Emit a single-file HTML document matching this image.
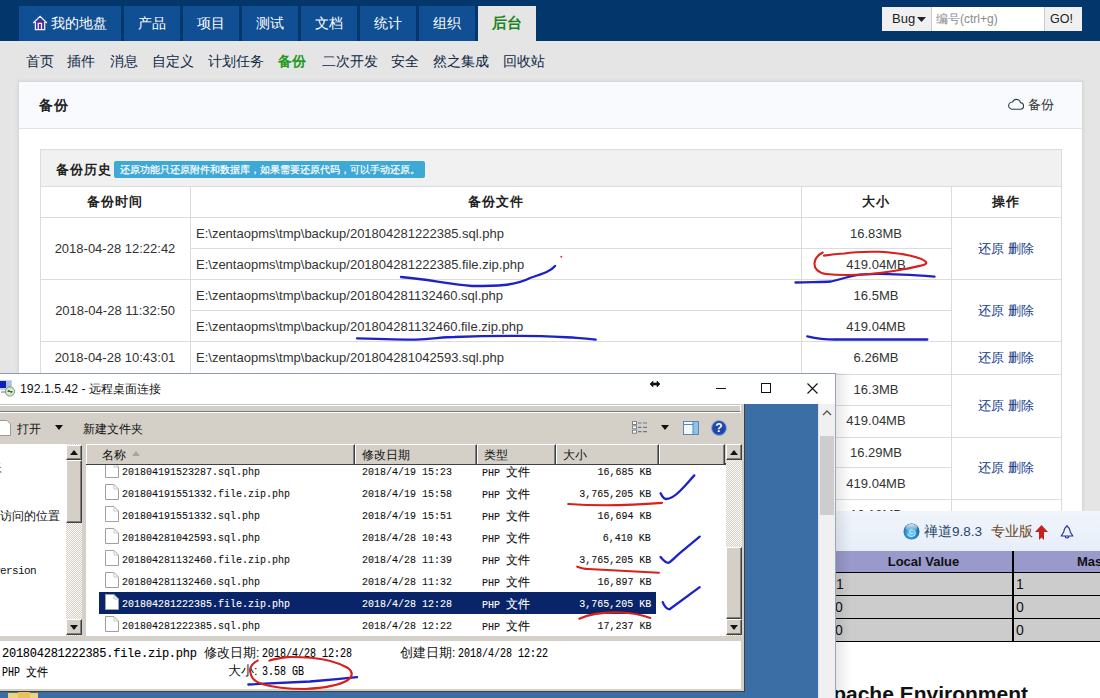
<!DOCTYPE html>
<html><head><meta charset="utf-8">
<style>
*{margin:0;padding:0;box-sizing:border-box}
html,body{width:1100px;height:698px;overflow:hidden}
body{position:relative;background:#e5e5e5;font-family:"Liberation Sans",sans-serif;color:#333;font-size:13px}
.a{position:absolute;white-space:nowrap}
#hdr{left:0;top:0;width:1100px;height:42px;background:#03376c;border-bottom:1px solid #dfe7f2}
.tab{position:absolute;top:6px;height:35px;background:#104f93;color:#fff;font-size:14px;line-height:34px;text-align:center}
.tab.act{background:#e5e5e5;color:#1b8420;font-weight:bold;font-size:15px;height:36px}
.sn{position:absolute;top:52px;font-size:14px;line-height:18px;color:#0f2844}
#panel{left:18px;top:81px;width:1065px;height:640px;background:#fff;border:1px solid #d8d8d8;box-shadow:0 0 4px rgba(0,0,0,.08)}
#ph{left:0;top:0;width:1063px;height:47px;background:#f8fafd;border-bottom:1px solid #e2e2e2}
.hl{position:absolute;height:1px;background:#dcdcdc}
.vl{position:absolute;width:1px;background:#dcdcdc}
.td{position:absolute;font-size:13px;color:#333;line-height:16px}
.th{position:absolute;font-size:13px;font-weight:bold;color:#222;line-height:16px;letter-spacing:1px}
.lk{position:absolute;font-size:13px;color:#163a88;line-height:16px}
.sbtn{background:#d4d0c8;border-top:1px solid #fff;border-left:1px solid #fff;border-right:1px solid #404040;border-bottom:1px solid #404040;box-shadow:inset -1px -1px 0 #808080}
.ms{font-family:"Liberation Mono",monospace;font-size:11px;line-height:16px;color:#000;-webkit-text-stroke-width:0.1px;transform:scaleX(.909);transform-origin:left center}
.ms.r{transform-origin:right center}
.cj{font-family:"Liberation Sans",sans-serif;font-size:12px;display:inline-block;transform:scaleX(1.1);transform-origin:left center}
.hd{background:#d4d0c8;border-top:1px solid #fff;border-left:1px solid #fff;border-right:1px solid #404040;box-shadow:inset -1px 0 0 #808080}
</style></head>
<body>
<!-- header -->
<div id="hdr" class="a"></div>
<div class="tab" style="left:19px;width:102px"></div>
<svg class="a" style="left:32px;top:15px" width="16" height="16" viewBox="0 0 16 16"><path d="M3.6 7.5L8.1 3.3L12.5 7.5V14.5H3.6z" fill="#4b2d98"/><path d="M1.2 8L8.1 1.4L14.9 8M3.4 7V14.6H12.7V7M6.3 14.5V8.4H9.5V14.5" fill="none" stroke="#f2ecff" stroke-width="1.3"/></svg>
<div class="a" style="left:51px;top:6px;height:34px;line-height:34px;font-size:14px;color:#fff">我的地盘</div>
<div class="tab" style="left:124px;width:56px">产品</div>
<div class="tab" style="left:183px;width:56px">项目</div>
<div class="tab" style="left:242px;width:56px">测试</div>
<div class="tab" style="left:301px;width:56px">文档</div>
<div class="tab" style="left:360px;width:56px">统计</div>
<div class="tab" style="left:419px;width:56px">组织</div>
<div class="tab act" style="left:478px;width:58px">后台</div>

<!-- search -->
<div class="a" style="left:882px;top:7px;width:49px;height:24px;background:#f0f0f0;font-size:13px;line-height:24px;color:#222;padding-left:10px">Bug</div><svg class="a" style="left:917px;top:17px" width="9" height="5"><path d="M0 0H9L4.5 5z" fill="#222"/></svg>
<div class="a" style="left:931px;top:7px;width:113px;height:24px;background:#fff;font-size:12px;line-height:24px;color:#8a8a8a;padding-left:4px;border-left:1px solid #ccc">编号(ctrl+g)</div>
<div class="a" style="left:1044px;top:7px;width:38px;height:24px;background:#f0f0f0;font-size:12.5px;line-height:24px;color:#222;padding-left:5px;border-left:1px solid #ccc">GO!</div>

<!-- subnav -->
<div class="sn" style="left:26px">首页</div>
<div class="sn" style="left:67px">插件</div>
<div class="sn" style="left:110px">消息</div>
<div class="sn" style="left:152px">自定义</div>
<div class="sn" style="left:208px">计划任务</div>
<div class="sn" style="left:278px;color:#229922;font-weight:bold">备份</div>
<div class="sn" style="left:322px">二次开发</div>
<div class="sn" style="left:391px">安全</div>
<div class="sn" style="left:433px">然之集成</div>
<div class="sn" style="left:503px">回收站</div>

<!-- panel -->
<div id="panel" class="a">
  <div id="ph" class="a"></div>
</div>
<div class="th" style="left:39px;top:97px;font-size:14px">备份</div>
<div class="a" style="left:1008px;top:97px;font-size:13px;color:#333;line-height:16px"><svg width="16" height="12" viewBox="0 0 16 12" style="vertical-align:-1px"><path d="M4 11.2h8.3a3.2 3.2 0 0 0 .3-6.4A4.2 4.2 0 0 0 4.6 4 3.6 3.6 0 0 0 4 11.2z" fill="none" stroke="#2a3b50" stroke-width="1.1"/></svg> 备份</div>

<!-- section -->
<div class="a" style="left:40px;top:149px;width:1022px;height:38px;background:#f1f1f1;border:1px solid #dcdcdc;border-bottom:none"></div>
<div class="th" style="left:56px;top:162px">备份历史</div>
<div class="a" style="left:114px;top:161px;width:311px;height:17px;background:#3fa9d6;border-radius:2px;color:#fff;font-size:10px;line-height:17px;padding-left:6px;letter-spacing:0px;-webkit-text-stroke-width:0.2px">还原功能只还原附件和数据库，如果需要还原代码，可以手动还原。</div>

<!-- table lines -->
<div id="tbl">
<div class="hl" style="left:40px;top:186px;width:1022px"></div>
<div class="hl" style="left:40px;top:217px;width:1022px"></div>
<div class="hl" style="left:40px;top:279px;width:1022px"></div>
<div class="hl" style="left:40px;top:341px;width:1022px"></div>
<div class="hl" style="left:40px;top:374px;width:1022px"></div>
<div class="hl" style="left:40px;top:437px;width:1022px"></div>
<div class="hl" style="left:40px;top:499px;width:1022px"></div>
<div class="hl" style="left:190px;top:248px;width:762px"></div>
<div class="hl" style="left:190px;top:310px;width:762px"></div>
<div class="hl" style="left:190px;top:405px;width:762px"></div>
<div class="hl" style="left:190px;top:467px;width:762px"></div>
<div class="vl" style="left:40px;top:149px;height:560px"></div>
<div class="vl" style="left:190px;top:186px;height:520px"></div>
<div class="vl" style="left:801px;top:186px;height:520px"></div>
<div class="vl" style="left:951px;top:186px;height:520px"></div>
<div class="vl" style="left:1061px;top:149px;height:560px"></div>
<div class="hl" style="left:40px;top:149px;width:1022px"></div>
<div class="th" style="left:40px;width:150px;top:194px;text-align:center">备份时间</div>
<div class="th" style="left:190px;width:611px;top:194px;text-align:center">备份文件</div>
<div class="th" style="left:801px;width:150px;top:194px;text-align:center">大小</div>
<div class="th" style="left:951px;width:110px;top:194px;text-align:center">操作</div>
<div class="td" style="left:40px;width:150px;top:241px;text-align:center">2018-04-28 12:22:42</div>
<div class="td" style="left:40px;width:150px;top:303px;text-align:center">2018-04-28 11:32:50</div>
<div class="td" style="left:40px;width:150px;top:350px;text-align:center">2018-04-28 10:43:01</div>
<div class="td" style="left:196px;top:226px">E:\zentaopms\tmp\backup/201804281222385.sql.php</div>
<div class="td" style="left:801px;width:150px;top:226px;text-align:center">16.83MB</div>
<div class="td" style="left:196px;top:257px">E:\zentaopms\tmp\backup/201804281222385.file.zip.php</div>
<div class="td" style="left:801px;width:150px;top:257px;text-align:center">419.04MB</div>
<div class="td" style="left:196px;top:288px">E:\zentaopms\tmp\backup/201804281132460.sql.php</div>
<div class="td" style="left:801px;width:150px;top:288px;text-align:center">16.5MB</div>
<div class="td" style="left:196px;top:319px">E:\zentaopms\tmp\backup/201804281132460.file.zip.php</div>
<div class="td" style="left:801px;width:150px;top:319px;text-align:center">419.04MB</div>
<div class="td" style="left:196px;top:350px">E:\zentaopms\tmp\backup/201804281042593.sql.php</div>
<div class="td" style="left:801px;width:150px;top:350px;text-align:center">6.26MB</div>
<div class="td" style="left:801px;width:150px;top:382px;text-align:center">16.3MB</div>
<div class="td" style="left:801px;width:150px;top:413px;text-align:center">419.04MB</div>
<div class="td" style="left:801px;width:150px;top:445px;text-align:center">16.29MB</div>
<div class="td" style="left:801px;width:150px;top:476px;text-align:center">419.04MB</div>
<div class="td" style="left:801px;width:150px;top:507px;text-align:center">16.18MB</div>
<div class="lk" style="left:951px;width:110px;top:241px;text-align:center">还原 删除</div>
<div class="lk" style="left:951px;width:110px;top:303px;text-align:center">还原 删除</div>
<div class="lk" style="left:951px;width:110px;top:350px;text-align:center">还原 删除</div>
<div class="lk" style="left:951px;width:110px;top:398px;text-align:center">还原 删除</div>
<div class="lk" style="left:951px;width:110px;top:460px;text-align:center">还原 删除</div>
</div>

<!-- ===== RDP window ===== -->
<div class="a" style="left:-10px;top:373px;width:846px;height:330px;background:#fff;border:1px solid #8d9cb0"></div>
<svg class="a" style="left:0;top:379px" width="16" height="18" viewBox="0 0 16 18">
 <rect x="0" y="1" width="12" height="10" fill="#c9d3dc"/><rect x="0" y="2" width="6" height="7" fill="#0d1fb8"/><rect x="6" y="2" width="5" height="6" fill="#a8c0ea"/>
 <rect x="1" y="12" width="8" height="2" fill="#b5bcc4"/>
 <circle cx="10" cy="12.5" r="4.6" fill="#d8ead0" stroke="#6a7a6a" stroke-width="0.8"/><path d="M7.5 12.5h5M7.8 12.5l1.6-1.4M12.2 12.5l-1.6 1.4" stroke="#1f7a1f" stroke-width="1.2" fill="none"/>
</svg>
<div class="a" style="left:20px;top:381px;font-size:12.3px;line-height:16px;color:#111">192.1.5.42 - 远程桌面连接</div>
<svg class="a" style="left:649px;top:380px" width="12" height="8" viewBox="0 0 12 8"><path d="M1 4L4 1V3H8V1L11 4L8 7V5H4V7z" fill="#111" stroke="#111" stroke-width=".6" stroke-linejoin="round"/></svg>
<div class="a" style="left:716px;top:388px;width:10px;height:1px;background:#111"></div>
<div class="a" style="left:761px;top:383px;width:10px;height:10px;border:1px solid #111"></div>
<svg class="a" style="left:807px;top:383px" width="11" height="11" viewBox="0 0 11 11"><path d="M.5 .5L10.5 10.5M10.5 .5L.5 10.5" stroke="#111" stroke-width="1.1"/></svg>

<!-- client area -->
<div class="a" style="left:745px;top:404px;width:73px;height:294px;background:#3a6ea5"></div>
<div class="a" style="left:0;top:692px;width:745px;height:6px;background:#3a6ea5"></div>
<svg class="a" style="left:8px;top:692px" width="32" height="6"><rect x="0" y="1" width="30" height="5" fill="#f0d27a"/><rect x="10" y="0" width="12" height="6" fill="#e8c35c"/></svg>
<div class="a" style="left:818px;top:404px;width:17px;height:294px;background:#f0f0f0;border-left:1px solid #e3e3e3"></div>
<div class="a" style="left:820px;top:436px;width:14px;height:79px;background:#cdcdcd"></div>
<svg class="a" style="left:822px;top:409px" width="10" height="7" viewBox="0 0 10 7"><path d="M1 6L5 2L9 6" stroke="#555" stroke-width="1.4" fill="none"/></svg>

<!-- explorer -->
<div class="a" style="left:-5px;top:404px;width:750px;height:288px;background:#d4d0c8;border-right:1px solid #404040;border-bottom:1px solid #404040"></div>
<div class="a" style="left:-5px;top:404px;width:746px;height:8px;border-top:1px solid #c4c4c4;border-bottom:1px solid #7c7c7c;border-right:1px solid #fff;background:#d0cfcc;box-shadow:inset 0 1px 0 #fff"></div><div class="a" style="left:-5px;top:412px;width:746px;height:1px;background:#fff"></div>
<!-- toolbar -->
<svg class="a" style="left:0;top:420px" width="12" height="16" viewBox="0 0 12 16"><path d="M-2 .5H7L10.5 4V15.5H-2z" fill="#fff" stroke="#9a9a9a"/></svg>
<div class="a" style="left:17px;top:421px;font-size:12px;line-height:16px;color:#111">打开</div>
<svg class="a" style="left:55px;top:425px" width="8" height="5"><path d="M0 0H8L4 5z" fill="#111"/></svg>
<div class="a" style="left:83px;top:421px;font-size:12px;line-height:16px;color:#111">新建文件夹</div>
<svg class="a" style="left:632px;top:421px" width="16" height="13" viewBox="0 0 16 13">
 <rect x=".5" y=".5" width="4" height="3" fill="#fff" stroke="#7a8590"/><rect x=".5" y="4.8" width="4" height="3" fill="#fff" stroke="#7a8590"/><rect x=".5" y="9.2" width="4" height="3" fill="#fff" stroke="#7a8590"/>
 <path d="M6 2h3.5M11 2h4M6 6.3h3.5M11 6.3h4M6 10.7h3.5M11 10.7h4" stroke="#6b7885" stroke-width="1.2"/>
</svg>
<svg class="a" style="left:661px;top:425px" width="8" height="5"><path d="M0 0H8L4 5z" fill="#111"/></svg>
<svg class="a" style="left:683px;top:421px" width="16" height="14" viewBox="0 0 16 14">
 <rect x=".5" y=".5" width="15" height="13" fill="#f4f8fc" stroke="#5b87b5"/><rect x="10" y="1" width="5" height="12" fill="#8cc3e8"/><path d="M10 1V13M1 3.5H10" stroke="#5b87b5"/>
</svg>
<svg class="a" style="left:711px;top:420px" width="16" height="16" viewBox="0 0 16 16">
 <circle cx="8" cy="8" r="7.5" fill="#2352b8" stroke="#8fa6d8" stroke-width="1"/><circle cx="8" cy="8" r="6" fill="#1f46a8"/>
 <text x="8" y="12.3" text-anchor="middle" font-family="Liberation Sans" font-weight="bold" font-size="12" fill="#fff">?</text>
</svg>

<!-- nav pane -->
<div class="a" style="left:0;top:444px;width:66px;height:192px;background:#fff;overflow:hidden">
 <div class="a" style="left:-10px;top:16px;font-size:12px;line-height:14px;color:#111">夹</div>
 <div class="a" style="left:0;top:65px;font-size:12px;line-height:14px;color:#111">访问的位置</div>
 <div class="a" style="left:-6px;top:120px;font-family:'Liberation Mono',monospace;font-size:11px;line-height:14px;color:#111;letter-spacing:-0.6px">version</div>
</div>
<!-- nav scrollbar -->
<div class="a" style="left:66px;top:444px;width:16px;height:192px;background:repeating-conic-gradient(#d4d0c8 0 25%,#fbfaf8 0 50%) 0 0/2px 2px"></div>
<div class="a sbtn" style="left:66px;top:445px;width:16px;height:15px"></div>
<div class="a sbtn" style="left:66px;top:460px;width:16px;height:63px"></div>
<div class="a sbtn" style="left:66px;top:619px;width:16px;height:16px"></div>
<svg class="a" style="left:70px;top:450px" width="8" height="5"><path d="M0 5H8L4 0z" fill="#111"/></svg>
<svg class="a" style="left:70px;top:625px" width="8" height="5"><path d="M0 0H8L4 5z" fill="#111"/></svg>

<!-- list -->
<div class="a" style="left:86px;top:444px;width:640px;height:192px;background:#fff;overflow:hidden" id="list">
<div class="a" style="left:13px;top:148px;width:557px;height:22px;background:#0a246a"></div>
<svg class="a" style="left:19px;top:18px" width="14" height="16" viewBox="0 0 14 16"><path d="M.5 .5H9L13.5 5V15.5H.5z" fill="#fff" stroke="#a0a0a0"/><path d="M9 .5V5H13.5" fill="none" stroke="#c8c8c8"/></svg>
<div class="a ms" style="left:36px;top:20px;color:#111">201804191523287.sql.php</div>
<div class="a ms" style="left:276px;top:20px;color:#111">2018/4/19 15:23</div>
<div class="a ms" style="left:396px;top:20px;color:#111">PHP <span class="cj">文件</span></div>
<div class="a ms r" style="right:75px;top:20px;color:#111">16,685 KB</div>
<svg class="a" style="left:19px;top:40px" width="14" height="16" viewBox="0 0 14 16"><path d="M.5 .5H9L13.5 5V15.5H.5z" fill="#fff" stroke="#a0a0a0"/><path d="M9 .5V5H13.5" fill="none" stroke="#c8c8c8"/></svg>
<div class="a ms" style="left:36px;top:42px;color:#111">201804191551332.file.zip.php</div>
<div class="a ms" style="left:276px;top:42px;color:#111">2018/4/19 15:58</div>
<div class="a ms" style="left:396px;top:42px;color:#111">PHP <span class="cj">文件</span></div>
<div class="a ms r" style="right:75px;top:42px;color:#111">3,765,205 KB</div>
<svg class="a" style="left:19px;top:62px" width="14" height="16" viewBox="0 0 14 16"><path d="M.5 .5H9L13.5 5V15.5H.5z" fill="#fff" stroke="#a0a0a0"/><path d="M9 .5V5H13.5" fill="none" stroke="#c8c8c8"/></svg>
<div class="a ms" style="left:36px;top:64px;color:#111">201804191551332.sql.php</div>
<div class="a ms" style="left:276px;top:64px;color:#111">2018/4/19 15:51</div>
<div class="a ms" style="left:396px;top:64px;color:#111">PHP <span class="cj">文件</span></div>
<div class="a ms r" style="right:75px;top:64px;color:#111">16,694 KB</div>
<svg class="a" style="left:19px;top:84px" width="14" height="16" viewBox="0 0 14 16"><path d="M.5 .5H9L13.5 5V15.5H.5z" fill="#fff" stroke="#a0a0a0"/><path d="M9 .5V5H13.5" fill="none" stroke="#c8c8c8"/></svg>
<div class="a ms" style="left:36px;top:86px;color:#111">201804281042593.sql.php</div>
<div class="a ms" style="left:276px;top:86px;color:#111">2018/4/28 10:43</div>
<div class="a ms" style="left:396px;top:86px;color:#111">PHP <span class="cj">文件</span></div>
<div class="a ms r" style="right:75px;top:86px;color:#111">6,410 KB</div>
<svg class="a" style="left:19px;top:106px" width="14" height="16" viewBox="0 0 14 16"><path d="M.5 .5H9L13.5 5V15.5H.5z" fill="#fff" stroke="#a0a0a0"/><path d="M9 .5V5H13.5" fill="none" stroke="#c8c8c8"/></svg>
<div class="a ms" style="left:36px;top:108px;color:#111">201804281132460.file.zip.php</div>
<div class="a ms" style="left:276px;top:108px;color:#111">2018/4/28 11:39</div>
<div class="a ms" style="left:396px;top:108px;color:#111">PHP <span class="cj">文件</span></div>
<div class="a ms r" style="right:75px;top:108px;color:#111">3,765,205 KB</div>
<svg class="a" style="left:19px;top:128px" width="14" height="16" viewBox="0 0 14 16"><path d="M.5 .5H9L13.5 5V15.5H.5z" fill="#fff" stroke="#a0a0a0"/><path d="M9 .5V5H13.5" fill="none" stroke="#c8c8c8"/></svg>
<div class="a ms" style="left:36px;top:130px;color:#111">201804281132460.sql.php</div>
<div class="a ms" style="left:276px;top:130px;color:#111">2018/4/28 11:32</div>
<div class="a ms" style="left:396px;top:130px;color:#111">PHP <span class="cj">文件</span></div>
<div class="a ms r" style="right:75px;top:130px;color:#111">16,897 KB</div>
<svg class="a" style="left:19px;top:150px" width="14" height="16" viewBox="0 0 14 16"><path d="M.5 .5H9L13.5 5V15.5H.5z" fill="#fff" stroke="#a0a0a0"/><path d="M9 .5V5H13.5" fill="none" stroke="#c8c8c8"/></svg>
<div class="a ms" style="left:36px;top:152px;color:#fff">201804281222385.file.zip.php</div>
<div class="a ms" style="left:276px;top:152px;color:#fff">2018/4/28 12:28</div>
<div class="a ms" style="left:396px;top:152px;color:#fff">PHP <span class="cj">文件</span></div>
<div class="a ms r" style="right:75px;top:152px;color:#fff">3,765,205 KB</div>
<svg class="a" style="left:19px;top:172px" width="14" height="16" viewBox="0 0 14 16"><path d="M.5 .5H9L13.5 5V15.5H.5z" fill="#fff" stroke="#a0a0a0"/><path d="M9 .5V5H13.5" fill="none" stroke="#c8c8c8"/></svg>
<div class="a ms" style="left:36px;top:174px;color:#111">201804281222385.sql.php</div>
<div class="a ms" style="left:276px;top:174px;color:#111">2018/4/28 12:22</div>
<div class="a ms" style="left:396px;top:174px;color:#111">PHP <span class="cj">文件</span></div>
<div class="a ms r" style="right:75px;top:174px;color:#111">17,237 KB</div>
<div class="a" style="left:0;top:0;width:640px;height:21px;background:#d4d0c8;border-bottom:2px solid #404040"></div>
<div class="a hd" style="left:0px;top:0;width:269px;height:20px"></div>
<div class="a" style="left:16px;top:3px;font-size:12px;line-height:16px;color:#111">名称</div>
<div class="a hd" style="left:269px;top:0;width:122px;height:20px"></div>
<div class="a" style="left:276px;top:3px;font-size:12px;line-height:16px;color:#111">修改日期</div>
<div class="a hd" style="left:391px;top:0;width:79px;height:20px"></div>
<div class="a" style="left:398px;top:3px;font-size:12px;line-height:16px;color:#111">类型</div>
<div class="a hd" style="left:470px;top:0;width:103px;height:20px"></div>
<div class="a" style="left:477px;top:3px;font-size:12px;line-height:16px;color:#111">大小</div>
<div class="a hd" style="left:573px;top:0;width:66px;height:20px"></div>
<svg class="a" style="left:46px;top:7px" width="8" height="5"><path d="M0 5H8L4 0z" fill="#a8a49c"/></svg>
</div>
<!-- list scrollbar -->
<div class="a" style="left:726px;top:444px;width:16px;height:192px;background:repeating-conic-gradient(#d4d0c8 0 25%,#fbfaf8 0 50%) 0 0/2px 2px"></div>
<div class="a sbtn" style="left:726px;top:444px;width:16px;height:16px"></div>
<div class="a sbtn" style="left:726px;top:547px;width:16px;height:72px"></div>
<div class="a sbtn" style="left:726px;top:619px;width:16px;height:16px"></div>
<svg class="a" style="left:730px;top:450px" width="8" height="5"><path d="M0 5H8L4 0z" fill="#111"/></svg>
<svg class="a" style="left:730px;top:625px" width="8" height="5"><path d="M0 0H8L4 5z" fill="#111"/></svg>

<!-- details pane -->
<div class="a" style="left:0;top:641px;width:741px;height:48px;background:#fff"></div>
<div id="details">
<div class="a ms" style="left:2px;top:646px;transform:none;font-size:12px;letter-spacing:-0.25px">201804281222385.file.zip.php</div>
<div class="a" style="left:204px;top:645px;font-size:12.5px;line-height:16px;color:#111">修改日期:</div>
<div class="a ms" style="left:262px;top:646px;font-size:12px;transform:scaleX(.834)">2018/4/28 12:28</div>
<div class="a" style="left:400px;top:645px;font-size:12.5px;line-height:16px;color:#111">创建日期:</div>
<div class="a ms" style="left:458px;top:646px;font-size:12px;transform:scaleX(.834)">2018/4/28 12:22</div>
<div class="a ms" style="left:2px;top:664px;font-size:12px;transform:scaleX(.834)">PHP <span class="cj">文件</span></div>
<div class="a" style="left:228px;top:663px;font-size:12.5px;line-height:16px;color:#111">大小:</div>
<div class="a ms" style="left:262px;top:664px;font-size:12px;transform:scaleX(.834)">3.58 GB</div>
</div>

<!-- phpinfo window -->
<div class="a" style="left:835px;top:511px;width:265px;height:187px;background:#fff;overflow:hidden">
 <div class="a" style="left:0;top:0;width:265px;height:40px;background:linear-gradient(#f0f5fc,#e8eef8)"></div>
 <div class="a" style="left:0;top:40px;width:265px;height:91px;background:#000"></div>
 <div class="a" style="left:0;top:40px;width:177px;height:21px;background:#9999cc"></div>
 <div class="a" style="left:179px;top:40px;width:100px;height:21px;background:#9999cc"></div>
 <div class="a" style="left:0;top:62px;width:177px;height:22px;background:#cccccc"></div>
 <div class="a" style="left:179px;top:62px;width:100px;height:22px;background:#cccccc"></div>
 <div class="a" style="left:0;top:85px;width:177px;height:22px;background:#cccccc"></div>
 <div class="a" style="left:179px;top:85px;width:100px;height:22px;background:#cccccc"></div>
 <div class="a" style="left:0;top:108px;width:177px;height:22px;background:#cccccc"></div>
 <div class="a" style="left:179px;top:108px;width:100px;height:22px;background:#cccccc"></div>
</div>

<!-- phpinfo texts -->
<svg class="a" style="left:903px;top:523px" width="17" height="17" viewBox="0 0 17 17">
 <defs><radialGradient id="g1" cx="0.45" cy="0.6" r="0.6"><stop offset="0" stop-color="#7fd0f5"/><stop offset="0.55" stop-color="#2f8fd0"/><stop offset="1" stop-color="#145a98"/></radialGradient>
 <linearGradient id="g2" x1="0" y1="0" x2="0" y2="1"><stop offset="0" stop-color="#e8f2f8" stop-opacity=".95"/><stop offset="1" stop-color="#e8f2f8" stop-opacity="0"/></linearGradient></defs>
 <circle cx="8.5" cy="8.5" r="8" fill="url(#g1)"/><ellipse cx="8.5" cy="5" rx="6" ry="4" fill="url(#g2)"/>
 <path d="M5 10.5a3.6 3.2 0 1 0 4-3.5a2 1.8 0 1 0 1.5 2.6" stroke="#a8ecff" stroke-width="1.2" fill="none"/>
</svg>
<div class="a" style="left:924px;top:523px;font-size:13.5px;line-height:18px;color:#2a4668">禅道9.8.3</div>
<div class="a" style="left:991px;top:523px;font-size:13.5px;line-height:18px;color:#6b4520">专业版</div>
<svg class="a" style="left:1035px;top:525px" width="13" height="15" viewBox="0 0 13 15"><path d="M6.5 0L13 7H9V15L6.5 12.5L4 15V7H0z" fill="#c8201c"/></svg>
<svg class="a" style="left:1060px;top:524px" width="14" height="16" viewBox="0 0 14 16"><path d="M7 1V2.6M7 2.6C4.8 2.6 4.3 5 3.7 8L1.2 12H12.8L10.3 8C9.7 5 9.2 2.6 7 2.6zM5.2 12.2A1.8 1.8 0 0 0 8.8 12.2" fill="none" stroke="#2433a0" stroke-width="1.2" stroke-linejoin="round"/></svg>
<div class="a" style="left:835px;top:553px;width:177px;text-align:center;font-size:13px;font-weight:bold;line-height:18px;color:#111">Local Value</div>
<div class="a" style="left:1077px;top:553px;font-size:13px;font-weight:bold;line-height:18px;color:#111">Master Value</div>
<div class="a" style="left:836px;top:576px;font-size:14px;line-height:16px;color:#111">1</div>
<div class="a" style="left:1016px;top:576px;font-size:14px;line-height:16px;color:#111">1</div>
<div class="a" style="left:835px;top:599px;font-size:14px;line-height:16px;color:#111">0</div>
<div class="a" style="left:1016px;top:599px;font-size:14px;line-height:16px;color:#111">0</div>
<div class="a" style="left:835px;top:622px;font-size:14px;line-height:16px;color:#111">0</div>
<div class="a" style="left:1016px;top:622px;font-size:14px;line-height:16px;color:#111">0</div>
<div class="a" style="left:835px;top:672px;width:265px;height:26px;overflow:hidden"><div class="a" style="left:-17px;top:9px;font-size:21px;font-weight:bold;line-height:26px;color:#111">Apache Environment</div></div>
<!-- shadow of rdp window -->
<div class="a" style="left:835px;top:373px;width:16px;height:325px;background:linear-gradient(90deg,rgba(0,0,0,.10),rgba(0,0,0,0))"></div>
<div class="a" style="left:835px;top:373px;width:1px;height:325px;background:#9aa6b4"></div>

<!-- pen marks -->
<svg class="a" style="left:0;top:0" width="1100" height="698" viewBox="0 0 1100 698" fill="none" stroke-linecap="round" stroke-linejoin="round">
 <g stroke="#1c22c8" stroke-width="2.3">
  <path d="M401 277C425 279 450 284 472 286C495 286 515 286 530 278C545 273 551 271 555 266"/>
  <path d="M795.5 282.5C810 282 822 282 831 281.5C850 277 855 274 865 274.3C880 273 900 274 934.5 276.6"/>
  <path d="M357 338.3C380 339 400 339.6 416 339.6C435 338.5 445 337 454.5 337C480 336 500 335.8 518 335.8C545 335.8 560 337 576.6 337.8C585 338.5 590 339 595.7 339.6"/>
  <path d="M807.3 336.3C815 338 825 339.5 834.5 339.5L927.3 339.5"/>
  <path d="M660.6 493.2C662 496 664 499 666 499C670 499 676 495 680 491C686 485 690 480 694.3 475.4"/>
  <path d="M660.6 557C663 560 666 563 668.5 562.8C672 561 676 556 680.4 552.7L699.7 536.6"/>
  <path d="M662.7 602.2C664 606 667 609.3 669.6 609.3L699.7 587.1"/>
  <path d="M248.3 684.5C270 683.5 290 682.5 310 681.5C330 680 345 678.5 357 677.2"/>
 </g>
 <g stroke="#d8201c" stroke-width="2.1">
  <path d="M822.7 252.5C818 255 815 258 814.5 263C814 268 818 273 826 274C840 275.5 850 275 858 274.7C875 274 890 272 905 269C920 266 928 265 926 262C922 258 905 253 878.6 251.8C860 251.5 850 252.5 844.5 253.5C835 254 828 255 824 255.6"/>
  <path d="M568.2 504C590 505.5 615 506.5 662 502.9"/>
  <path d="M577.2 566.7C581 568 584 569 588 569L658.9 572.7"/>
  <path d="M579.3 618.7C590 614 605 612 620 612.5C635 613 645 616 650.3 617.9"/>
  <path d="M257.7 660.6C253 663 250 667 250 671C251 677 253 681 262 684C275 688 290 689 305 689C325 688 340 685 348 680C353 676 353 672 348 668C340 663 325 659 311 657.7C300 657 292 657 287 657.1C280 658 274 659 269.5 660.6"/>
 </g>
 <circle cx="561.3" cy="256.8" r="1" fill="#e03030" stroke="none"/>
</svg>
</body></html>
